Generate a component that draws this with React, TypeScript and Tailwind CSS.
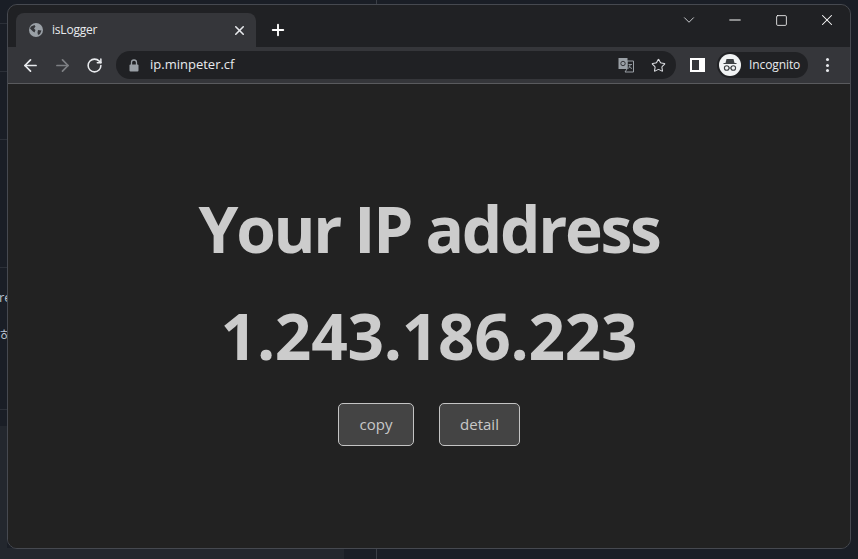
import { ArrowLeft, ArrowRight, RotateCw, Star, X, Plus, Minus, ChevronDown, Square } from "lucide-react";

const FONT = "font-['Open_Sans','Noto_Sans',sans-serif]";

function Globe() {
  return (
    <svg width="16" height="16" viewBox="0 0 16 16" className="shrink-0">
      <circle cx="8" cy="8" r="7" fill="#9aa0a6" />
      <path d="M3 4.500 6.500 3l1 1.500L6 6.500l1.500 1.500-1 2.500-1.500-1L2 6.500zM10 8l3.500.5-1.500 3.500-2 1-.5-2.500z" fill="#35363a" />
    </svg>
  );
}

function LockIcon() {
  return (
    <svg width="10" height="13" viewBox="0 0 10 13" className="shrink-0">
      <path d="M2.500 6V3.500a2.500 2.500 0 0 1 5 0V6" fill="none" stroke="#9aa0a6" strokeWidth="1.300" />
      <rect x="0.5" y="5.500" width="9" height="7" rx="1" fill="#9aa0a6" />
    </svg>
  );
}

function Translate() {
  return (
    <svg width="16" height="16" viewBox="0 0 16 16">
      <rect x="0.5" y="1" width="9" height="11" fill="#9aa0a6" />
      <path d="M9 4h6.500v11H7l2-3z" fill="none" stroke="#9aa0a6" strokeWidth="1" />
      <circle cx="5" cy="6.500" r="2.200" fill="none" stroke="#35363a" strokeWidth="1" />
      <path d="M10.500 7.500h3.500M12 7v1c0 2-1 3-2 3.500M11 9c.5 1.200 1.500 2 3 2.500" fill="none" stroke="#9aa0a6" strokeWidth="0.9" />
    </svg>
  );
}

function SpyHead() {
  return (
    <div className="w-[22px] h-[22px] rounded-full bg-[#f1f3f4] flex items-center justify-center shrink-0">
      <svg width="18" height="18" viewBox="0 0 18 18">
        <path d="M5.500 3h7l1 4h-9z" fill="#3c4043" />
        <path d="M2.500 7.500h13" stroke="#3c4043" strokeWidth="1.200" />
        <circle cx="5.700" cy="12" r="2.300" fill="none" stroke="#3c4043" strokeWidth="1.100" />
        <circle cx="12.300" cy="12" r="2.300" fill="none" stroke="#3c4043" strokeWidth="1.100" />
        <path d="M8 12h2" stroke="#3c4043" strokeWidth="1.100" />
      </svg>
    </div>
  );
}

function TabBar() {
  return (
    <div className="h-[42px] flex shrink-0 pl-[8px] pt-[8px] bg-[#202124] rounded-t-[10px]">
      <div className="w-[240px] h-[34px] bg-[#35363a] rounded-t-[8px] flex items-center pl-[12px] pr-[9px]">
        <Globe />
        <span className="ml-[8px] flex-1 text-[12px] tracking-[-0.2px] text-[#e8eaed] font-['Open_Sans',sans-serif]">isLogger</span>
        <X size={15} strokeWidth={2.500} className="text-[#e8eaed]" />
      </div>
      <div className="ml-[13px] mt-[8px]">
        <Plus size={18} strokeWidth={2.500} className="text-white" />
      </div>
      <div className="ml-auto flex items-start -mt-[3px]">
        <div className="w-[46px] flex justify-center pt-[1px]">
          <ChevronDown size={18} strokeWidth={1.200} className="text-[#dadce0]" />
        </div>
        <div className="w-[46px] flex justify-center pt-[1px]">
          <Minus size={18} strokeWidth={1.300} className="text-white" />
        </div>
        <div className="w-[46px] flex justify-center pt-[1px]">
          <Square size={13} strokeWidth={1.500} className="text-white mt-[3px]" />
        </div>
        <div className="w-[46px] flex justify-center pt-[1px]">
          <X size={18} strokeWidth={1.400} className="text-white" />
        </div>
      </div>
    </div>
  );
}

function Toolbar() {
  return (
    <div className="h-[37px] bg-[#35363a] border-b border-[#5a5b5e] flex items-center shrink-0">
      <ArrowLeft size={19} strokeWidth={2.200} className="ml-[13px] text-[#e8eaed]" />
      <ArrowRight size={19} strokeWidth={2.200} className="ml-[13px] text-[#7d7f83]" />
      <RotateCw size={17} strokeWidth={2.200} className="ml-[14px] text-[#e8eaed]" />
      <div className="ml-[13px] w-[560px] h-[28px] rounded-full bg-[#202124] flex items-center pl-[13px] pr-[10px]">
        <LockIcon />
        <span className="ml-[11px] flex-1 text-[13px] text-[#e8eaed] font-['Open_Sans',sans-serif]">ip.minpeter.cf</span>
        <Translate />
        <Star size={15} strokeWidth={1.700} className="ml-[17px] text-[#dadce0]" />
      </div>
      <div className="ml-[14px] w-[15px] h-[14px] border-2 border-white border-r-[6px] bg-[#35363a]" />
      <div className="ml-[12px] w-[91px] h-[26px] rounded-full bg-[#202124] flex items-center pl-[2px]">
        <SpyHead />
        <span className="ml-[8px] text-[12px] tracking-[-0.1px] text-[#e8eaed] font-['Open_Sans',sans-serif]">Incognito</span>
      </div>
      <div className="ml-[18px] flex flex-col gap-[2.500px]">
        <div className="w-[3px] h-[3px] rounded-full bg-[#e8eaed]" />
        <div className="w-[3px] h-[3px] rounded-full bg-[#e8eaed]" />
        <div className="w-[3px] h-[3px] rounded-full bg-[#e8eaed]" />
      </div>
    </div>
  );
}

export default function App() {
  return (
    <div className={`relative w-[858px] h-[559px] overflow-hidden bg-[#1a1e26] ${FONT}`}>
      {/* bits of the desktop window behind */}
      <div className="absolute left-0 top-[23px] w-[7px] h-px bg-[#2c3038]" />
      <div className="absolute left-0 top-[71px] w-[7px] h-px bg-[#2c3038]" />
      <div className="absolute left-0 top-[139px] w-[7px] h-px bg-[#2c3038]" />
      <div className="absolute left-0 top-[267px] w-[7px] h-px bg-[#2c3038]" />
      <div className="absolute left-0 top-[409px] w-[7px] h-px bg-[#2c3038]" />
      <div className="absolute left-0 top-[426px] w-[7px] h-[133px] bg-[#23272e]" />
      <div className="absolute left-[7px] top-[548px] w-[337px] h-[11px] bg-[#23272e]" />
      <div className="absolute left-[376px] top-0 w-px h-[559px] bg-[#3a3e46]" />
      <span className="absolute left-[-1px] top-[289px] text-[13px] leading-[16px] text-[#b8c0cc]">re</span>
      <span className="absolute left-0 top-[327px] text-[13px] leading-[16px] text-[#b8c0cc] font-['Noto_Sans_CJK_KR',sans-serif]">하</span>

      {/* browser window */}
      <div className="absolute left-[7px] top-[4px] w-[844px] h-[545px] flex flex-col border border-[#464950] rounded-[10px] overflow-hidden bg-[#222222]">
        <TabBar />
        <Toolbar />
        <main className="flex-1 flex flex-col items-center bg-[#222222]">
          <h1 className="mt-[103px] text-[64px] leading-[84px] tracking-[-2.300px] font-bold text-[#cccccc]">Your IP address</h1>
          <div className="mt-[23px] text-[64px] leading-[84px] tracking-[-0.300px] font-bold text-[#cccccc]">1.243.186.223</div>
          <div className="mt-[25px] flex gap-[25px]">
            <button className="w-[76px] h-[43px] rounded-[5px] border border-[#c4c4c4] bg-[#444444] text-[15px] text-[#c8c8c8]">copy</button>
            <button className="w-[81px] h-[43px] rounded-[5px] border border-[#c4c4c4] bg-[#444444] text-[15px] text-[#c8c8c8]">detail</button>
          </div>
        </main>
      </div>
    </div>
  );
}
